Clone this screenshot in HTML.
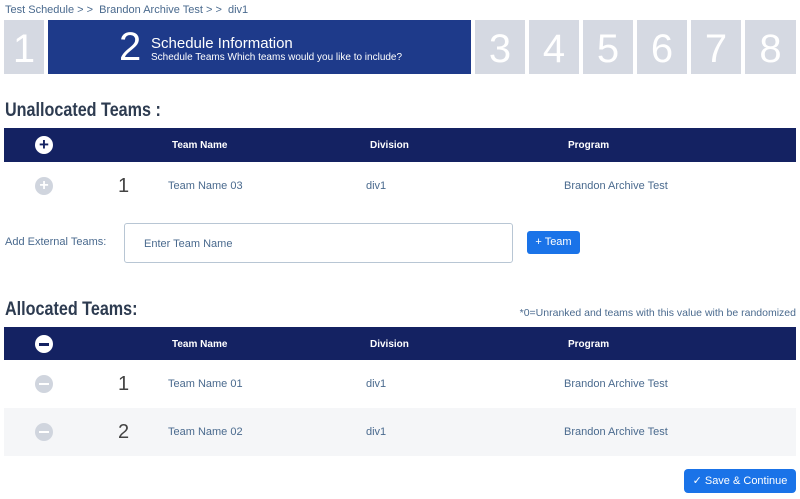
<!DOCTYPE html>
<html><head><style>
*{margin:0;padding:0;box-sizing:border-box}
body{width:800px;height:499px;background:#fff;font-family:"Liberation Sans",sans-serif;position:relative;overflow:hidden;color:#4a6a8e}
.a{position:absolute;white-space:nowrap}
.step{position:absolute;top:20px;height:54px;background:#d5d9e2;color:#fff;font-size:40px;text-align:center;line-height:58px}
.hdr{position:absolute;left:4px;width:792px;height:34px;background:#142262;color:#fff;font-size:10px;font-weight:bold}
.hdr span,.row span{position:absolute;white-space:nowrap}
.row{position:absolute;left:4px;width:792px;height:48px;font-size:11px;color:#4a6a8e}
.circ{position:absolute;width:18px;height:18px;border-radius:50%}
.num{font-size:20px;color:#444}
h2{position:absolute;left:5px;font-size:19px;font-weight:bold;color:#2d3b50;transform:scaleX(.85);transform-origin:left;white-space:nowrap}
</style></head><body>
<div class="a" style="left:5px;top:4px;font-size:11px">Test Schedule &gt; &gt;&nbsp; Brandon Archive Test &gt; &gt;&nbsp; div1</div>
<div class="step" style="left:4px;width:40px">1</div>
<div class="a" style="left:48px;top:20px;width:423px;height:54px;background:#1e3a8a"></div>
<div class="a" style="left:119px;top:25px;font-size:40px;color:#fff">2</div>
<div class="a" style="left:151px;top:35px;font-size:15px;color:#fff">Schedule Information</div>
<div class="a" style="left:151px;top:52px;font-size:10px;color:#fff">Schedule Teams Which teams would you like to include?</div>
<div class="step" style="left:475px;width:50px">3</div>
<div class="step" style="left:529px;width:50px">4</div>
<div class="step" style="left:583px;width:50px">5</div>
<div class="step" style="left:637px;width:50px">6</div>
<div class="step" style="left:691px;width:50px">7</div>
<div class="step" style="left:745px;width:51px">8</div>
<h2 style="top:100px">Unallocated Teams :</h2>
<div class="hdr" style="top:128px">
<div class="circ" style="left:31px;top:8px;background:#fff;color:#142262;font-size:17px;line-height:18px;text-align:center;font-weight:bold">+</div>
<span style="left:168px;top:12px">Team Name</span><span style="left:366px;top:12px">Division</span><span style="left:564px;top:12px">Program</span></div>
<div class="row" style="top:162px">
<div class="circ" style="left:31px;top:15px;background:#d0d5de;color:#fff;font-size:16px;line-height:18px;text-align:center;font-weight:bold">+</div>
<span class="num" style="left:114px;top:13px">1</span><span style="left:164px;top:18px">Team Name 03</span><span style="left:362px;top:18px">div1</span><span style="left:560px;top:18px">Brandon Archive Test</span></div>
<div class="a" style="left:5px;top:236px;font-size:11px">Add External Teams:</div>
<div class="a" style="left:124px;top:223px;width:389px;height:40px;border:1px solid #b8c6d4;border-radius:3px;font-size:11px;padding:14px 0 0 19px">Enter Team Name</div>
<div class="a" style="left:527px;top:231px;width:53px;height:23px;background:#1a73e8;border-radius:3px;color:#fff;font-size:11px;text-align:center;line-height:23px">+ Team</div>
<h2 style="top:299px">Allocated Teams:</h2>
<div class="a" style="right:4px;top:307px;font-size:10.5px">*0=Unranked and teams with this value with be randomized</div>
<div class="hdr" style="top:327px;height:33px">
<div class="circ" style="left:31px;top:8px;background:#fff"><div class="a" style="left:4px;top:8px;width:10px;height:2.5px;background:#142262"></div></div>
<span style="left:168px;top:12px">Team Name</span><span style="left:366px;top:12px">Division</span><span style="left:564px;top:12px">Program</span></div>
<div class="row" style="top:360px">
<div class="circ" style="left:31px;top:15px;background:#d0d5de"><div class="a" style="left:4px;top:8px;width:10px;height:2px;background:#fff"></div></div>
<span class="num" style="left:114px;top:13px">1</span><span style="left:164px;top:18px">Team Name 01</span><span style="left:362px;top:18px">div1</span><span style="left:560px;top:18px">Brandon Archive Test</span></div>
<div class="row" style="top:408px;background:#f5f6f8">
<div class="circ" style="left:31px;top:15px;background:#d0d5de"><div class="a" style="left:4px;top:8px;width:10px;height:2px;background:#fff"></div></div>
<span class="num" style="left:114px;top:13px">2</span><span style="left:164px;top:18px">Team Name 02</span><span style="left:362px;top:18px">div1</span><span style="left:560px;top:18px">Brandon Archive Test</span></div>
<div class="a" style="left:684px;top:469px;width:112px;height:24px;background:#1a73e8;border-radius:4px;color:#fff;font-size:11px;text-align:center;line-height:24px">✓ Save &amp; Continue</div>
</body></html>
